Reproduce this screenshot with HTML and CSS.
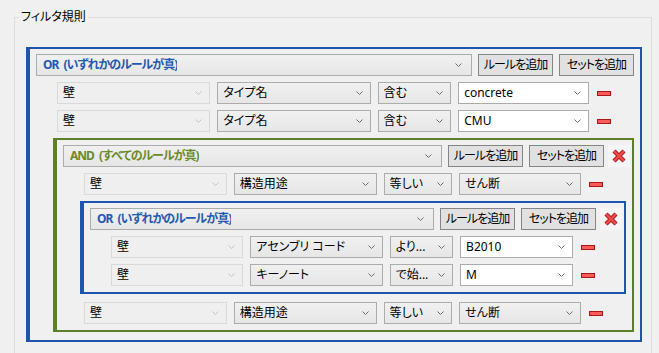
FILE: index.html
```html
<!DOCTYPE html>
<html lang="ja">
<head>
<meta charset="utf-8">
<title>フィルタ規則</title>
<link rel="stylesheet" href="styles.css">
</head>
<body>
<fieldset class="rules">
  <legend class="rules-title">フィルタ規則</legend>

  <div class="group group-or">
    <div class="group-head">
      <div class="combo combo-head"><span class="combo-text">OR (いずれかのルールが真)</span><svg class="chev" viewBox="0 0 7 4"><polyline points="0.5,0.5 3.5,3.5 6.5,0.5"/></svg></div>
      <button class="btn">ルールを追加</button>
      <button class="btn">セットを追加</button>
    </div>
    <div class="group-body">
      <div class="rule">
        <div class="combo combo-off"><span class="combo-text">壁</span><svg class="chev" viewBox="0 0 7 4"><polyline points="0.5,0.5 3.5,3.5 6.5,0.5"/></svg></div>
        <div class="combo"><span class="combo-text">タイプ名</span><svg class="chev" viewBox="0 0 7 4"><polyline points="0.5,0.5 3.5,3.5 6.5,0.5"/></svg></div>
        <div class="combo"><span class="combo-text">含む</span><svg class="chev" viewBox="0 0 7 4"><polyline points="0.5,0.5 3.5,3.5 6.5,0.5"/></svg></div>
        <div class="combo combo-value"><span class="combo-text">concrete</span><svg class="chev" viewBox="0 0 7 4"><polyline points="0.5,0.5 3.5,3.5 6.5,0.5"/></svg></div>
        <button class="btn-remove" aria-label="削除"></button>
      </div>
      <div class="rule">
        <div class="combo combo-off"><span class="combo-text">壁</span><svg class="chev" viewBox="0 0 7 4"><polyline points="0.5,0.5 3.5,3.5 6.5,0.5"/></svg></div>
        <div class="combo"><span class="combo-text">タイプ名</span><svg class="chev" viewBox="0 0 7 4"><polyline points="0.5,0.5 3.5,3.5 6.5,0.5"/></svg></div>
        <div class="combo"><span class="combo-text">含む</span><svg class="chev" viewBox="0 0 7 4"><polyline points="0.5,0.5 3.5,3.5 6.5,0.5"/></svg></div>
        <div class="combo combo-value"><span class="combo-text">CMU</span><svg class="chev" viewBox="0 0 7 4"><polyline points="0.5,0.5 3.5,3.5 6.5,0.5"/></svg></div>
        <button class="btn-remove" aria-label="削除"></button>
      </div>

      <div class="group group-and">
        <div class="group-head">
          <div class="combo combo-head"><span class="combo-text">AND (すべてのルールが真)</span><svg class="chev" viewBox="0 0 7 4"><polyline points="0.5,0.5 3.5,3.5 6.5,0.5"/></svg></div>
          <button class="btn">ルールを追加</button>
          <button class="btn">セットを追加</button>
          <button class="btn-delete" aria-label="セットを削除"><svg viewBox="0 0 14 14"><path class="x-out" d="M2 2 L12 12 M12 2 L2 12"/><path class="x-in" d="M2 2 L12 12 M12 2 L2 12"/></svg></button>
        </div>
        <div class="group-body">
          <div class="rule">
            <div class="combo combo-off"><span class="combo-text">壁</span><svg class="chev" viewBox="0 0 7 4"><polyline points="0.5,0.5 3.5,3.5 6.5,0.5"/></svg></div>
            <div class="combo"><span class="combo-text">構造用途</span><svg class="chev" viewBox="0 0 7 4"><polyline points="0.5,0.5 3.5,3.5 6.5,0.5"/></svg></div>
            <div class="combo"><span class="combo-text">等しい</span><svg class="chev" viewBox="0 0 7 4"><polyline points="0.5,0.5 3.5,3.5 6.5,0.5"/></svg></div>
            <div class="combo"><span class="combo-text">せん断</span><svg class="chev" viewBox="0 0 7 4"><polyline points="0.5,0.5 3.5,3.5 6.5,0.5"/></svg></div>
            <button class="btn-remove" aria-label="削除"></button>
          </div>

          <div class="group group-or">
            <div class="group-head">
              <div class="combo combo-head"><span class="combo-text">OR (いずれかのルールが真)</span><svg class="chev" viewBox="0 0 7 4"><polyline points="0.5,0.5 3.5,3.5 6.5,0.5"/></svg></div>
              <button class="btn">ルールを追加</button>
              <button class="btn">セットを追加</button>
              <button class="btn-delete" aria-label="セットを削除"><svg viewBox="0 0 14 14"><path class="x-out" d="M2 2 L12 12 M12 2 L2 12"/><path class="x-in" d="M2 2 L12 12 M12 2 L2 12"/></svg></button>
            </div>
            <div class="group-body">
              <div class="rule">
                <div class="combo combo-off"><span class="combo-text">壁</span><svg class="chev" viewBox="0 0 7 4"><polyline points="0.5,0.5 3.5,3.5 6.5,0.5"/></svg></div>
                <div class="combo"><span class="combo-text">アセンブリ コード</span><svg class="chev" viewBox="0 0 7 4"><polyline points="0.5,0.5 3.5,3.5 6.5,0.5"/></svg></div>
                <div class="combo"><span class="combo-text">より...</span><svg class="chev" viewBox="0 0 7 4"><polyline points="0.5,0.5 3.5,3.5 6.5,0.5"/></svg></div>
                <div class="combo combo-value"><span class="combo-text">B2010</span><svg class="chev" viewBox="0 0 7 4"><polyline points="0.5,0.5 3.5,3.5 6.5,0.5"/></svg></div>
                <button class="btn-remove" aria-label="削除"></button>
              </div>
              <div class="rule">
                <div class="combo combo-off"><span class="combo-text">壁</span><svg class="chev" viewBox="0 0 7 4"><polyline points="0.5,0.5 3.5,3.5 6.5,0.5"/></svg></div>
                <div class="combo"><span class="combo-text">キーノート</span><svg class="chev" viewBox="0 0 7 4"><polyline points="0.5,0.5 3.5,3.5 6.5,0.5"/></svg></div>
                <div class="combo"><span class="combo-text">で始...</span><svg class="chev" viewBox="0 0 7 4"><polyline points="0.5,0.5 3.5,3.5 6.5,0.5"/></svg></div>
                <div class="combo combo-value"><span class="combo-text">M</span><svg class="chev" viewBox="0 0 7 4"><polyline points="0.5,0.5 3.5,3.5 6.5,0.5"/></svg></div>
                <button class="btn-remove" aria-label="削除"></button>
              </div>
            </div>
          </div>

          <div class="rule">
            <div class="combo combo-off"><span class="combo-text">壁</span><svg class="chev" viewBox="0 0 7 4"><polyline points="0.5,0.5 3.5,3.5 6.5,0.5"/></svg></div>
            <div class="combo"><span class="combo-text">構造用途</span><svg class="chev" viewBox="0 0 7 4"><polyline points="0.5,0.5 3.5,3.5 6.5,0.5"/></svg></div>
            <div class="combo"><span class="combo-text">等しい</span><svg class="chev" viewBox="0 0 7 4"><polyline points="0.5,0.5 3.5,3.5 6.5,0.5"/></svg></div>
            <div class="combo"><span class="combo-text">せん断</span><svg class="chev" viewBox="0 0 7 4"><polyline points="0.5,0.5 3.5,3.5 6.5,0.5"/></svg></div>
            <button class="btn-remove" aria-label="削除"></button>
          </div>
        </div>
      </div>
    </div>
  </div>
</fieldset>
</body>
</html>
```

FILE: styles.css
```css
html, body {
  margin: 0;
  background: #f0f0f0;
  overflow: hidden;
}

body {
  font-family: "Noto Sans", "Noto Sans CJK JP", sans-serif;
  font-size: 12px;
  color: #000;
  font-feature-settings: "palt";
}

.rules {
  margin: 7px 7px 0 14px;
  padding: 20px 9px 30px 11px;
  border: 1px solid #dcdcdc;
  min-width: 0;
}

.rules-title {
  margin-left: -7px;
  padding: 0 2px;
  line-height: 20px;
}

.group {
  display: flex;
  flex-direction: column;
  gap: 6px;
  border: 2px solid;
  border-left-width: 4px;
  padding: 5px 6px 6px 6px;
}

.group-or { border-color: #1d55ad; }
.group-and { border-color: #5b7f2b; }

.group-body {
  display: flex;
  flex-direction: column;
  gap: 6px;
  margin-left: 17px;
}

.group-body > .group { margin-bottom: 2px; }

.group-head {
  display: flex;
  align-items: center;
  gap: 6px;
}

.combo {
  box-sizing: border-box;
  height: 22px;
  min-width: 0;
  display: flex;
  align-items: center;
  justify-content: space-between;
  gap: 4px;
  padding: 0 7px 0 5px;
  border: 1px solid #acacac;
  background: linear-gradient(#f0f0f0, #e6e6e6);
  line-height: 20px;
}

.combo-text {
  white-space: nowrap;
  overflow: hidden;
}

.chev {
  flex: none;
  width: 7px;
  height: 4px;
  fill: none;
  stroke: #6d6d6d;
  stroke-width: 1;
}

.combo-off {
  border-color: #d9d9d9;
  background: #efefef;
}
.combo-off .chev { stroke: #c3c3c3; }

.combo-value {
  background: #fff;
  border-color: #acacac;
}

.combo-head {
  flex: 1 1 0;
  padding-left: 6px;
  padding-right: 9px;
}
.combo-head .combo-text {
  font-weight: bold;
  letter-spacing: -1px;
  word-spacing: 3px;
}
.group-or > .group-head .combo-text { color: #2458b0; }
.group-and > .group-head .combo-text { color: #6a8a2c; }

.btn {
  flex: none;
  box-sizing: border-box;
  width: 75px;
  height: 22px;
  padding: 0;
  border: 1px solid #858585;
  background: #e1e1e1;
  font: inherit;
  color: #000;
  line-height: 20px;
  letter-spacing: -1px;
}

.btn-delete {
  flex: none;
  box-sizing: border-box;
  width: 22px;
  height: 22px;
  margin-left: -2px;
  margin-right: -4px;
  padding: 4px;
  border: none;
  background: #f5f5f5;
  display: flex;
}
.btn-delete svg { width: 14px; height: 14px; }
.x-out { stroke: #b32020; stroke-width: 4.4; fill: none; }
.x-in { stroke: #ef4a4a; stroke-width: 2.4; fill: none; }

.rule {
  display: grid;
  grid-template-columns: minmax(0, 30fr) minmax(0, 30fr) minmax(0, 14.4fr) minmax(0, 25.6fr) 14px;
  align-items: center;
  column-gap: 7px;
  padding: 0 24px 0 4px;
}

.btn-remove {
  box-sizing: border-box;
  width: 14px;
  height: 5px;
  margin-left: 1px;
  padding: 0;
  border: 1px solid #a81818;
  background: #ff5a5a;
}
```
